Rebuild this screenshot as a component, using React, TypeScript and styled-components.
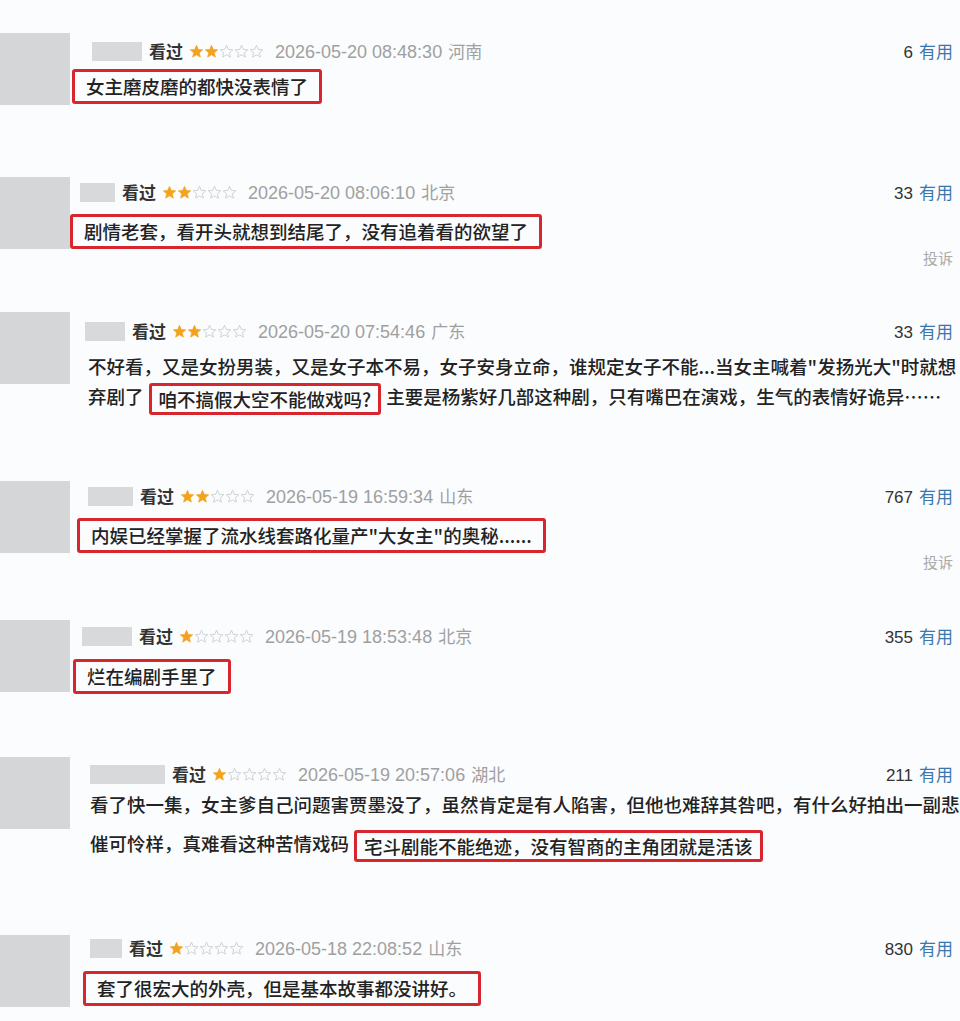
import React from 'react'
import styled, { createGlobalStyle } from 'styled-components'

const GlobalStyle = createGlobalStyle`
  html, body {
    margin: 0;
    padding: 0;
    background: #fafcfd;
  }
  body {
    font-family: "Noto Sans CJK SC", "Liberation Sans", sans-serif;
  }
`

const Page = styled.div`
  width: 960px;
  height: 1021px;
  overflow: hidden;
  padding-top: 33px;
  box-sizing: border-box;
  background: #fafcfd;
`
const Item = styled.div<{ $h: number }>`
  display: flex;
  align-items: flex-start;
  height: ${p => p.$h}px;
`
const Avatar = styled.div`
  width: 70px;
  height: 72px;
  flex-shrink: 0;
  background: #d5d6d7;
`
const Body = styled.div<{ $left: number; $top: number }>`
  flex: 1;
  min-width: 0;
  margin-left: ${p => p.$left - 70}px;
  padding-top: ${p => p.$top}px;
  padding-right: 7px;
`
const Meta = styled.div<{ $indent: number }>`
  display: flex;
  align-items: baseline;
  height: 22px;
  line-height: 22px;
  padding-left: ${p => p.$indent}px;
`
const NameBox = styled.div<{ $w: number }>`
  align-self: center;
  width: ${p => p.$w}px;
  height: 19px;
  background: #d8d9da;
`
const Seen = styled.span`
  margin-left: 7px;
  font-size: 17px;
  color: #333;
  font-weight: 700;
`
const Stars = styled.span`
  align-self: center;
  display: flex;
  margin-left: 6px;
`
const DateText = styled.span`
  margin-left: 11px;
  font-family: "Liberation Sans", "Noto Sans CJK SC", sans-serif;
  font-size: 18px;
  color: #a0a0a0;
  white-space: nowrap;
`
const Region = styled.span`
  margin-left: 6px;
  font-size: 17px;
  color: #a0a0a0;
`
const Useful = styled.span`
  margin-left: auto;
  white-space: nowrap;
`
const Count = styled.span`
  font-family: "Liberation Sans", sans-serif;
  font-size: 17px;
  color: #333;
  margin-right: 6px;
`
const UsefulLink = styled.span`
  font-size: 17px;
  color: #3a77ad;
`
const Content = styled.div<{ $gap: number; $indent: number }>`
  margin-top: ${p => p.$gap}px;
  padding-left: ${p => p.$indent}px;
  font-size: 18.5px;
  font-weight: 500;
  color: #222;
`
const Line = styled.div<{ $lh: number }>`
  line-height: ${p => p.$lh}px;
  white-space: nowrap;
`
const Marked = styled.span<{ $inline: boolean }>`
  display: inline-block;
  border: 3px solid #d8262f;
  border-radius: 3px;
  padding: 0 ${p => (p.$inline ? 7 : 11)}px;
  line-height: ${p => (p.$inline ? 26 : 29)}px;
  margin: 0 ${p => (p.$inline ? 5 : 0)}px;
  vertical-align: middle;
`
const Report = styled.div`
  text-align: right;
  margin-top: -2px;
  font-size: 15px;
  color: #aaa;
`

const Star = ({ on }: { on: boolean }) => (
  <svg width="15" height="15" viewBox="0 0 24 24">
    <polygon
      points="12,2 14.9,8.6 22,9.3 16.6,14 18.2,21 12,17.3 5.8,21 7.4,14 2,9.3 9.1,8.6"
      fill={on ? '#f2a31b' : 'none'}
      stroke={on ? '#f2a31b' : '#cfd2d6'}
      strokeWidth={on ? 1 : 1.6}
    />
  </svg>
)

type Seg = { t: string; box?: boolean }
type Review = {
  h: number
  top: number
  left: number
  indent: number
  textIndent: number
  nameW: number
  stars: number
  date: string
  region: string
  useful: number
  gap: number
  lh: number
  lines: Seg[][]
  report?: boolean
}

const reviews: Review[] = [
  {
    h: 144, top: 7, left: 72, indent: 20, textIndent: 0, nameW: 50, stars: 2,
    date: '2026-05-20 08:48:30', region: '河南', useful: 6, gap: 5, lh: 35,
    lines: [[{ t: '女主磨皮磨的都快没表情了', box: true }]],
  },
  {
    h: 135, top: 4, left: 70, indent: 10, textIndent: 0, nameW: 35, stars: 2,
    date: '2026-05-20 08:06:10', region: '北京', useful: 33, gap: 8, lh: 37, report: true,
    lines: [[{ t: '剧情老套，看开头就想到结尾了，没有追着看的欲望了', box: true }]],
  },
  {
    h: 169, top: 8, left: 85, indent: 0, textIndent: 3, nameW: 40, stars: 2,
    date: '2026-05-20 07:54:46', region: '广东', useful: 33, gap: 9, lh: 30,
    lines: [
      [{ t: '不好看，又是女扮男装，又是女子本不易，女子安身立命，谁规定女子不能...当女主喊着"发扬光大"时就想' }],
      [
        { t: '弃剧了' },
        { t: '咱不搞假大空不能做戏吗?', box: true },
        { t: '主要是杨紫好几部这种剧，只有嘴巴在演戏，生气的表情好诡异……' },
      ],
    ],
  },
  {
    h: 139, top: 4, left: 77, indent: 11, textIndent: 0, nameW: 45, stars: 2,
    date: '2026-05-19 16:59:34', region: '山东', useful: 767, gap: 10, lh: 33, report: true,
    lines: [[{ t: '内娱已经掌握了流水线套路化量产"大女主"的奥秘......', box: true }]],
  },
  {
    h: 137, top: 5, left: 73, indent: 9, textIndent: 0, nameW: 50, stars: 1,
    date: '2026-05-19 18:53:48', region: '北京', useful: 355, gap: 11, lh: 32,
    lines: [[{ t: '烂在编剧手里了', box: true }]],
  },
  {
    h: 178, top: 6, left: 90, indent: 0, textIndent: 0, nameW: 75, stars: 1,
    date: '2026-05-19 20:57:06', region: '湖北', useful: 211, gap: 0, lh: 39,
    lines: [
      [{ t: '看了快一集，女主爹自己问题害贾墨没了，虽然肯定是有人陷害，但他也难辞其咎吧，有什么好拍出一副悲' }],
      [
        { t: '催可怜样，真难看这种苦情戏码' },
        { t: '宅斗剧能不能绝迹，没有智商的主角团就是活该', box: true },
      ],
    ],
  },
  {
    h: 100, top: 2, left: 83, indent: 7, textIndent: 0, nameW: 32, stars: 1,
    date: '2026-05-18 22:08:52', region: '山东', useful: 830, gap: 11, lh: 33,
    lines: [[{ t: '套了很宏大的外壳，但是基本故事都没讲好。', box: true }]],
  },
]

const ReviewItem = ({ r }: { r: Review }) => {
  const single = r.lines.length === 1
  return (
    <Item $h={r.h}>
      <Avatar />
      <Body $left={r.left} $top={r.top}>
        <Meta $indent={r.indent}>
          <NameBox $w={r.nameW} />
          <Seen>看过</Seen>
          <Stars>
            {[0, 1, 2, 3, 4].map(i => <Star key={i} on={i < r.stars} />)}
          </Stars>
          <DateText>{r.date}</DateText>
          <Region>{r.region}</Region>
          <Useful>
            <Count>{r.useful}</Count>
            <UsefulLink>有用</UsefulLink>
          </Useful>
        </Meta>
        <Content $gap={r.gap} $indent={r.textIndent}>
          {r.lines.map((line, li) => (
            <Line key={li} $lh={r.lh}>
              {line.map((seg, si) =>
                seg.box ? (
                  <Marked key={si} $inline={!single}>{seg.t}</Marked>
                ) : (
                  <span key={si}>{seg.t}</span>
                )
              )}
            </Line>
          ))}
        </Content>
        {r.report && <Report>投诉</Report>}
      </Body>
    </Item>
  )
}

const App = () => {
  return (
    <Page>
      <GlobalStyle />
      {reviews.map((r, i) => <ReviewItem key={i} r={r} />)}
    </Page>
  )
}

export default App
